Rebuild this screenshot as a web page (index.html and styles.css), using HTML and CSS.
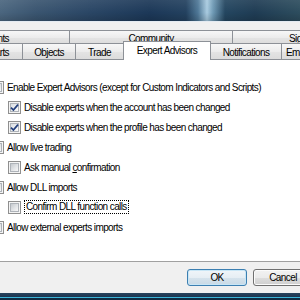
FILE: index.html
```html
<!DOCTYPE html>
<html>
<head>
<meta charset="utf-8">
<link rel="stylesheet" href="styles.css">
</head>
<body>
<div class="titlebar"></div>
<div class="tabs">
  <div class="tabrow top">
    <div class="tab t-events">Events</div>
    <div class="tab t-community">Community</div>
    <div class="tab t-signals">Signals</div>
  </div>
  <div class="tabrow bottom">
    <div class="tab t-charts">Charts</div>
    <div class="tab t-objects">Objects</div>
    <div class="tab t-trade">Trade</div>
    <div class="tab t-experts selected">Expert Advisors</div>
    <div class="tab t-notif">Notifications</div>
    <div class="tab t-email">Email</div>
  </div>
</div>
<div class="panel">
  <div class="row"><span class="cb"><span class="cb-in"></span></span><span>Enable Expert Advisors (except for Custom Indicators and Scripts)</span></div>
  <div class="row sub"><span class="cb checked"><span class="cb-in"><svg class="tick" viewBox="0 0 9 9" width="9" height="9"><path d="M1 4.6 L3.4 7 L8 1.6" fill="none" stroke="#233f7c" stroke-width="1.7"/></svg></span></span><span>Disable experts when the account has been changed</span></div>
  <div class="row sub"><span class="cb checked"><span class="cb-in"><svg class="tick" viewBox="0 0 9 9" width="9" height="9"><path d="M1 4.6 L3.4 7 L8 1.6" fill="none" stroke="#233f7c" stroke-width="1.7"/></svg></span></span><span>Disable experts when the profile has been changed</span></div>
  <div class="row"><span class="cb"><span class="cb-in"></span></span><span>Allow live trading</span></div>
  <div class="row sub"><span class="cb"><span class="cb-in"></span></span><span>Ask manual <u>c</u>onfirmation</span></div>
  <div class="row"><span class="cb"><span class="cb-in"></span></span><span>Allow DLL imports</span></div>
  <div class="row sub"><span class="cb"><span class="cb-in"></span></span><span class="focus">Confirm DLL function calls</span></div>
  <div class="row"><span class="cb"><span class="cb-in"></span></span><span>Allow external experts imports</span></div>
</div>
<div class="footer">
  <button class="btn default">OK</button>
  <button class="btn">Cancel</button>
</div>
<div class="frame-bottom"></div>
</body>
</html>
```

FILE: styles.css
```css
* { box-sizing: border-box; }
html, body { margin: 0; padding: 0; }
body {
  width: 300px;
  height: 300px;
  overflow: hidden;
  background: #f0f0f0;
  font-family: "Liberation Sans", Arial, sans-serif;
  font-size: 10px;
  letter-spacing: -0.6px;
  color: #000;
  display: flex;
  flex-direction: column;
}
.titlebar {
  flex: none;
  height: 22px;
  border-bottom: 1px solid #e4ebf2;
  background:
    linear-gradient(180deg, rgba(255,255,255,0.08) 0%, rgba(0,0,0,0) 60%, rgba(0,0,0,0.15) 100%),
    linear-gradient(90deg, #4b667f 0%, #3a5570 12%, #2a4665 30%, #1c3858 50%, #23415f 62%, #4f7897 66%, #a9cbe0 69%, #6f9ab5 71%, #244660 75%, #1f3c54 85%, #2d4d5e 100%);
}
.tabs {
  flex: none;
  padding-top: 8px;
  margin-left: -110px;
  position: relative;
  z-index: 2;
}
.tabrow { display: flex; white-space: nowrap; }
.tabrow.top { height: 14px; }
.tabrow.top .tab { padding-top: 1px; }
.tabrow.bottom { height: 16px; margin-bottom: -1px; align-items: flex-end; }
.tab {
  flex: none;
  display: flex;
  align-items: center;
  justify-content: center;
  height: 100%;
  border: 1px solid #8d9197;
  border-bottom: none;
  margin-right: -1px;
  background: linear-gradient(180deg, #f7f7f7 0%, #ececec 50%, #e4e4e4 51%, #dcdcdc 100%);
}
.tabrow.bottom .tab { height: 17px; padding-top: 2px; border-bottom: 1px solid #8d9197; }
.t-events { width: 180px; justify-content: flex-end; padding-right: 60px; }
.t-community { width: 164px; }
.t-signals { width: 160px; justify-content: flex-start; padding-left: 56px; }
.t-charts { width: 133px; justify-content: flex-end; padding-right: 13px; }
.t-objects { width: 54px; }
.t-trade { width: 49px; }
.t-experts { width: 88px; }
.t-notif { width: 72px; }
.t-email { width: 60px; justify-content: flex-start; padding-left: 4px; }
.tabrow.bottom .tab.selected {
  position: relative;
  z-index: 3;
  height: 19px;
  border-bottom: none;
  background: #fff;
  padding-top: 0;
  padding-bottom: 2px;
}
.panel {
  flex: none;
  height: 203px;
  margin: 0 -20px;
  padding: 17px 0 0 10px;
  background: #fff;
  border: 1px solid #8d9197;
  border-bottom-color: #a0a0a0;
}
.row {
  height: 20px;
  display: flex;
  align-items: center;
  gap: 3px;
  white-space: nowrap;
}
.row.sub { padding-left: 17px; }
.cb {
  flex: none;
  width: 13px;
  height: 13px;
  border: 1px solid #8f8f8f;
  background: #f4f4f4;
  padding: 1px;
  display: flex;
}
.cb-in {
  flex: 1;
  display: flex;
  align-items: center;
  justify-content: center;
  border: 1px solid #aeb3b9;
  background: linear-gradient(135deg, #c5c9ce 0%, #e2e4e7 55%, #f8f8f8 100%);
}
.cb.checked .cb-in {
  background: linear-gradient(135deg, #d9dde2 0%, #eceef0 55%, #fafafa 100%);
}
.tick { flex: none; margin: -2px; }
.focus { border: 1px dotted #000; padding: 0 1px; line-height: 12px; }
u { text-decoration: underline; }
.footer {
  flex: 1;
  display: flex;
  justify-content: flex-end;
  align-items: flex-start;
  gap: 6px;
  padding-top: 7px;
  margin-right: -13px;
}
.btn {
  width: 60px;
  height: 17px;
  padding: 0;
  font: inherit;
  letter-spacing: inherit;
  color: #000;
  border: 1px solid #707070;
  border-radius: 3px;
  background: linear-gradient(180deg, #f2f2f2 0%, #ebebeb 50%, #dddddd 51%, #cfcfcf 100%);
  box-shadow: inset 0 0 0 1px #fbfbfb;
}
.btn.default {
  border-color: #3c7fb1;
  background: linear-gradient(180deg, #f0f5f9 0%, #e6eef4 50%, #d6e3ec 51%, #c8d9e6 100%);
  box-shadow: inset 0 0 0 1px #c8e6f6;
}
.frame-bottom {
  flex: none;
  height: 7px;
  background: linear-gradient(180deg, #27435c 0px, #1b3550 4px, #3ab4d8 4px, #3ab4d8 5px, #0f2a40 5px);
}
```
